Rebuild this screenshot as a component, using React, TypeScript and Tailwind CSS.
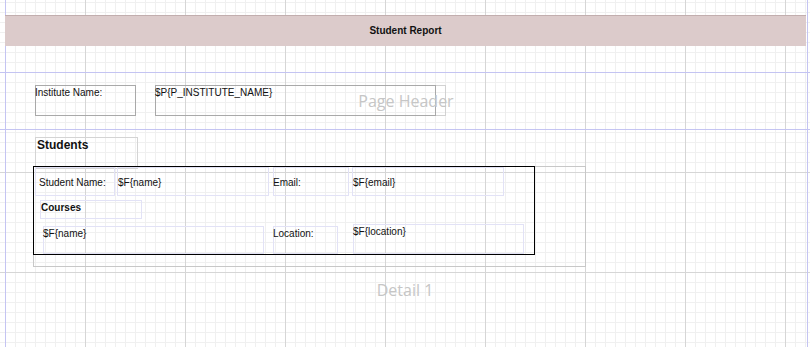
import React from 'react'

// report designer canvas: grid, band guides and the element frames
const grid =
  'bg-white bg-[linear-gradient(to_right,#d6d6d6_1px,transparent_1px),linear-gradient(to_bottom,#d6d6d6_1px,transparent_1px),linear-gradient(to_right,#f0f0f0_1px,transparent_1px),linear-gradient(to_bottom,#f0f0f0_1px,transparent_1px)] bg-[size:100px_100px,100px_100px,10px_10px,10px_10px] bg-[position:85px_0,0_72px,5px_0,0_2px]'

const txt = "absolute whitespace-nowrap text-[10px] leading-[12px] text-[#111] font-['Liberation_Sans',Arial,sans-serif]"
const bandLabel = "absolute whitespace-nowrap text-[16px] leading-[20px] text-[#c6c6c6] font-['Open_Sans','Noto_Sans',sans-serif]"
const field = 'absolute border border-[#e2e2f6]'

export default function App() {
  return (
    <div className={`relative w-[810px] h-[347px] overflow-hidden ${grid}`}>
      {/* margin / band guides */}
      <div className="absolute left-[5px] top-0 h-full w-px bg-[#c4c4f2]" />
      <div className="absolute left-[807px] top-0 h-full w-px bg-[#c4c4f2]" />
      <div className="absolute left-0 top-[72px] w-full h-px bg-[#c4c4f2]" />
      <div className="absolute left-0 top-[129px] w-full h-px bg-[#c4c4f2]" />

      {/* title band */}
      <div className="absolute left-[5px] top-[15px] w-[801px] h-[31px] bg-[#dccbcb] border-t border-[#c2aeae]" />
      <div className={`${txt} left-[5px] top-[25px] w-[801px] text-center font-bold`}>Student Report</div>

      {/* page header */}
      <div className="absolute left-[35px] top-[85px] w-[101px] h-[31px] border border-[#a9a9a9]" />
      <div className="absolute left-[155px] top-[85px] w-[291px] h-[31px] border border-[#d2d2d2]" />
      <div className="absolute left-[155px] top-[85px] w-[281px] h-[31px] border border-[#a9a9a9]" />
      <div className={`${txt} left-[35px] top-[87px]`}>Institute Name:</div>
      <div className={`${txt} left-[155px] top-[87px]`}>$P{'{'}P_INSTITUTE_NAME{'}'}</div>
      <div className={`${bandLabel} left-[306px] top-[91px] w-[200px] text-center`}>Page Header</div>

      {/* detail */}
      <div className="absolute left-[35px] top-[137px] w-[103px] h-[32px] border border-[#d4d4d4]" />
      <div className={`${txt} left-[37px] top-[138px] text-[12px] leading-[14px] font-bold`}>Students</div>

      <div className="absolute left-[33px] top-[166px] w-[553px] h-[101px] border border-[#c8c8c8]" />

      <div className={`${field} left-[35px] top-[167px] w-[80px] h-[29px]`} />
      <div className={`${field} left-[117px] top-[167px] w-[152px] h-[29px]`} />
      <div className={`${field} left-[273px] top-[167px] w-[76px] h-[29px]`} />
      <div className={`${field} left-[352px] top-[167px] w-[152px] h-[29px]`} />
      <div className={`${field} left-[40px] top-[200px] w-[102px] h-[19px]`} />
      <div className={`${field} left-[43px] top-[226px] w-[221px] h-[28px]`} />
      <div className={`${field} left-[273px] top-[226px] w-[65px] h-[28px]`} />
      <div className={`${field} left-[353px] top-[224px] w-[171px] h-[30px]`} />

      <div className="absolute left-[33px] top-[166px] w-[502px] h-[89px] border border-black" />

      <div className={`${txt} left-[39px] top-[177px]`}>Student Name:</div>
      <div className={`${txt} left-[118px] top-[177px]`}>$F{'{'}name{'}'}</div>
      <div className={`${txt} left-[273px] top-[177px]`}>Email:</div>
      <div className={`${txt} left-[353px] top-[177px]`}>$F{'{'}email{'}'}</div>
      <div className={`${txt} left-[41px] top-[202px] font-bold`}>Courses</div>
      <div className={`${txt} left-[43px] top-[228px]`}>$F{'{'}name{'}'}</div>
      <div className={`${txt} left-[273px] top-[228px]`}>Location:</div>
      <div className={`${txt} left-[353px] top-[226px]`}>$F{'{'}location{'}'}</div>

      <div className={`${bandLabel} left-[305px] top-[280px] w-[200px] text-center`}>Detail 1</div>
    </div>
  )
}
